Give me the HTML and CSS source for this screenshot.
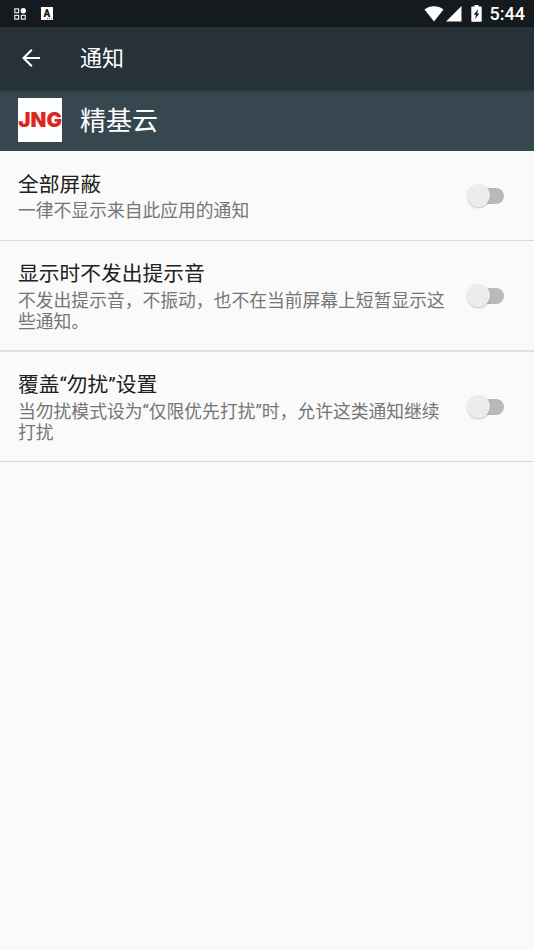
FILE: index.html
```html
<!DOCTYPE html>
<html lang="zh-CN">
<head>
<meta charset="utf-8">
<title>通知</title>
<link rel="stylesheet" href="styles.css">
</head>
<body>
<div class="status">
  <svg class="status-apps" viewBox="0 0 12 12" width="12" height="12"><g fill="none" stroke="#e4e5e6" stroke-width="1.2"><path d="M.8.8h3.8v3.8H.8zM.8 7.4h3.8v3.8H.8zM7.4 7.4h3.8v3.8H7.4z"/></g><circle cx="9.3" cy="2.7" r="2.7" fill="#fff"/></svg>
  <svg class="status-input" viewBox="0 0 12 13" width="12" height="13"><rect width="12" height="13" fill="#fff"/><text class="status-letter" x="5.800" y="10" text-anchor="middle">A</text><path d="M6 11.300h1v1H6zM8 11.300h1v1H8zM10 11.300h1v1h-1z" fill="#5a5f61"/></svg>
  <svg class="status-wifi" viewBox="0 0 20 16" width="20" height="16"><path d="M.5 3.400C6-.9 14-.9 19.500 3.400L10 15.500z" fill="#fff"/></svg>
  <svg class="status-signal" viewBox="0 0 16 16" width="16" height="16"><path d="M15.500 0v15.500H0z" fill="#fff"/></svg>
  <svg class="status-battery" viewBox="0 0 11 17" width="11" height="17"><path d="M3.500 0h4v1.600H10a.7.7 0 0 1 .7.7V16a.7.7 0 0 1-.7.7H1a.7.7 0 0 1-.7-.7V2.300a.7.7 0 0 1 .7-.7h2.500z" fill="#fff"/><path d="M7 4 2.800 9.800h2.200L4.200 14 8.200 8.400H6.200z" fill="#141a1d"/></svg>
  <span class="clock">5:44</span>
</div>
<header class="toolbar">
  <svg class="back" viewBox="0 0 18 18" width="18" height="18"><path d="M9.800.8 1.600 9l8.200 8.200M1.800 9H18" fill="none" stroke="#fff" stroke-width="2.100"/></svg>
  <h1 class="toolbar-title">通知</h1>
</header>
<section class="app">
  <svg class="logo" viewBox="0 0 44 44" width="44" height="44"><rect width="44" height="44" fill="#fff"/><text class="logo-text" x=".3" y="29.300" textLength="43.700" lengthAdjust="spacingAndGlyphs">JNG</text></svg>
  <h2 class="app-name">精基云</h2>
</section>
<main>
  <div class="row row-single">
    <div class="text"><div class="title">全部屏蔽</div><div class="summary">一律不显示来自此应用的通知</div></div>
    <span class="switch"></span>
  </div>
  <div class="row row-tall">
    <div class="text"><div class="title">显示时不发出提示音</div><div class="summary">不发出提示音，不振动，也不在当前屏幕上短暂显示这<br>些通知。</div></div>
    <span class="switch"></span>
  </div>
  <div class="row">
    <div class="text"><div class="title">覆盖“勿扰”设置</div><div class="summary">当勿扰模式设为“仅限优先打扰”时，允许这类通知继续<br>打扰</div></div>
    <span class="switch"></span>
  </div>
</main>
</body>
</html>
```
FILE: styles.css
```css
* { box-sizing: border-box; }
body {
  margin: 0;
  min-height: 950px;
  background: #fafafa;
  font-family: Roboto, "Noto Sans CJK SC", sans-serif;
  overflow: hidden;
}
.status {
  display: flex;
  align-items: center;
  height: 27px;
  padding: 0 9px 0 14px;
  background: #141a1d;
}
.status-input { margin-left: 15px; }
.status-letter {
  fill: #141a1d;
  font: 900 10px Roboto, sans-serif;
}
.status-wifi { margin-left: auto; }
.status-signal { margin-left: 2px; }
.status-battery { margin-left: 9px; }
.clock {
  margin-left: 8px;
  color: #fff;
  font: 500 18px/27px Roboto, sans-serif;
}
.toolbar {
  position: relative;
  display: flex;
  align-items: center;
  height: 63px;
  padding: 0 0 1px 22px;
  background: #263238;
  box-shadow: 0 1px 3px rgba(0, 0, 0, .35);
}
.toolbar-title {
  margin: 2px 0 0 40px;
  color: #fff;
  font-size: 22px;
  font-weight: 400;
  line-height: 32px;
}
.app {
  display: flex;
  align-items: center;
  height: 61px;
  padding: 0 0 1px 18px;
  background: #37474f;
}
.logo-text {
  fill: #dc261c;
  font: 900 20px Inter, sans-serif;
}
.app-name {
  margin: 2px 0 0 18px;
  color: #fff;
  font-size: 26px;
  font-weight: 400;
  line-height: 38px;
}
.row {
  display: flex;
  align-items: center;
  justify-content: space-between;
  height: 110px;
  padding: 0 30px 0 18px;
  border-bottom: 1px solid #d9d9d9;
}
.row-single { height: 90px; }
.row-tall {
  height: 111px;
  border-bottom: 2px solid #e1e1e1;
}
.text {
  align-self: flex-start;
  padding-top: 20px;
}
.title {
  color: #212121;
  font-size: 20.750px;
  line-height: 27px;
}
.summary {
  margin-top: 2px;
  color: #757575;
  font-size: 17.800px;
  line-height: 21px;
  white-space: nowrap;
}
.row-single .text { padding-top: 21px; }
.row-single .summary { margin-top: 1px; }
.switch {
  position: relative;
  flex: none;
  width: 38px;
  height: 24px;
}
.switch::before {
  content: "";
  position: absolute;
  inset: 4px 0 4px 8px;
  border-radius: 8px;
  background: #b9b9b9;
}
.switch::after {
  content: "";
  position: absolute;
  left: 1px;
  top: 0;
  width: 23px;
  height: 23px;
  border-radius: 50%;
  background: #ececec;
  box-shadow: 0 1px 1.500px rgba(0, 0, 0, .22);
}
```
